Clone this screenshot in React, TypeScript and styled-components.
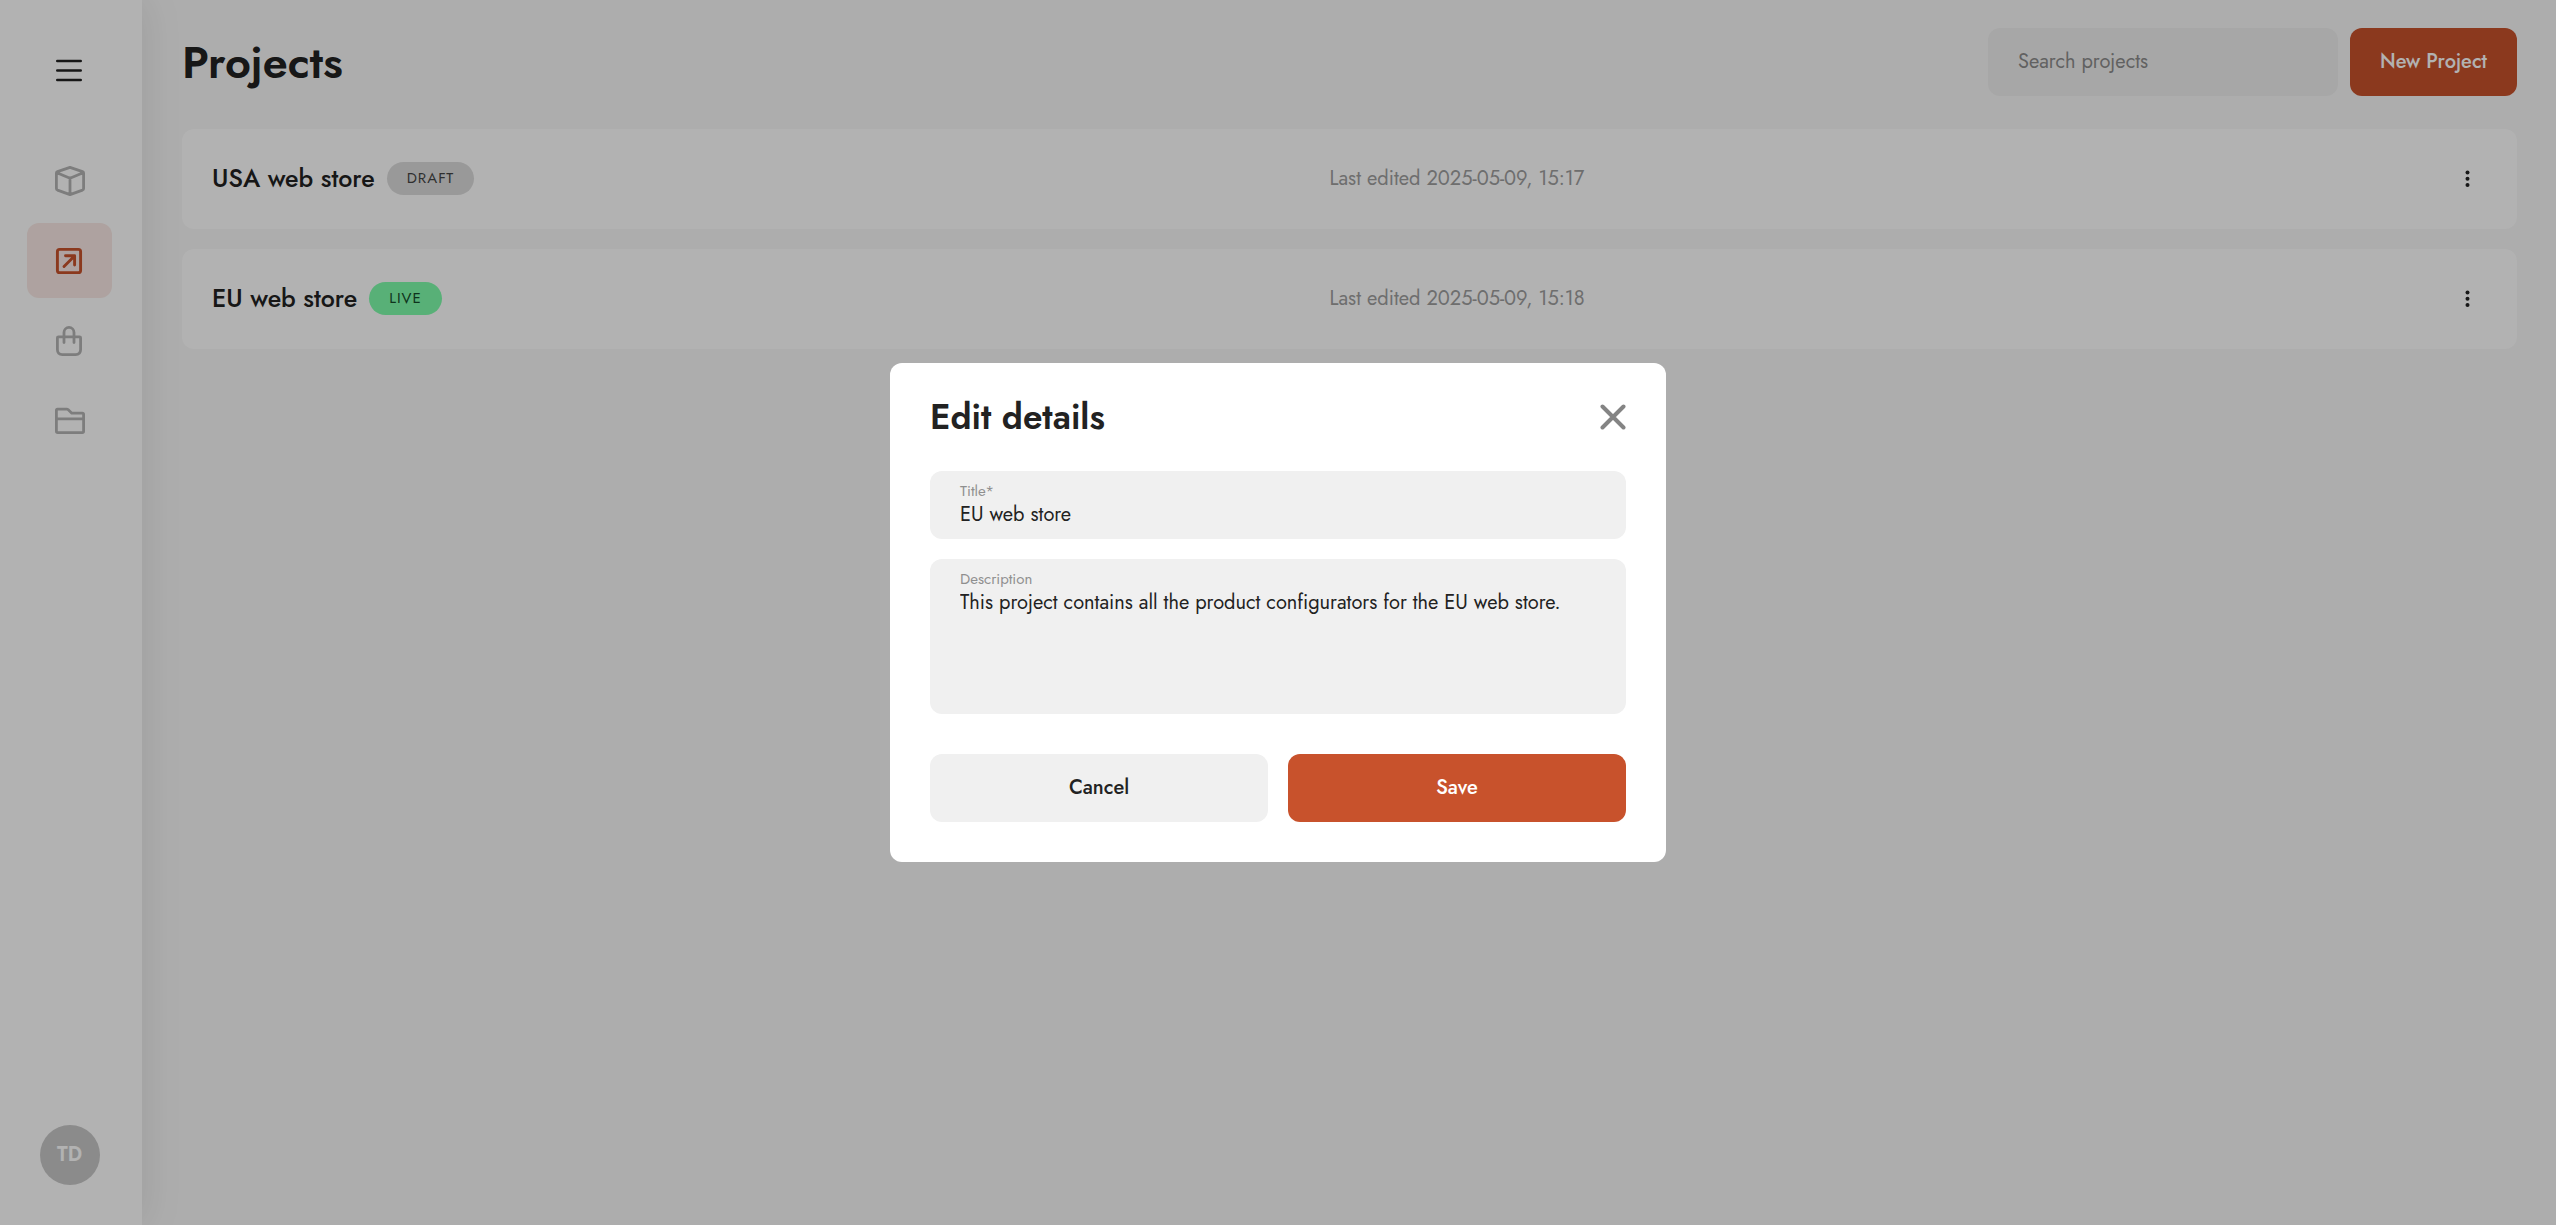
import React, { useState } from "react";
import styled, { createGlobalStyle, css } from "styled-components";

const color = {
  page: "#f8f8f8",
  surface: "#ffffff",
  field: "#f0f0f0",
  ink: "#222222",
  muted: "#9e9e9e",
  icon: "#b4b4b4",
  accent: "#c8522c",
  accentSoft: "#f9e9e5",
};

const GlobalStyle = createGlobalStyle`
  * { box-sizing: border-box; }
  body {
    margin: 0;
    background: ${color.page};
    color: ${color.ink};
    font-family: Jost, Lato, "Open Sans", sans-serif;
    font-size: 20px;
  }
  button, input, textarea { font: inherit; color: inherit; }
`;

const Shell = styled.div`
  display: flex;
  min-height: 100vh;
`;

const Sidebar = styled.aside`
  position: relative;
  z-index: 1;
  display: flex;
  flex-direction: column;
  width: 142px;
  padding: 40px 30px 40px 27px;
  background: ${color.surface};
  box-shadow: 0 0 40px rgba(0, 0, 0, 0.1);
`;

const IconButton = styled.button`
  display: grid;
  place-items: center;
  padding: 0;
  border: 0;
  background: none;
  cursor: pointer;
`;

const MenuToggle = styled(IconButton)`
  height: 60px;
`;

const Nav = styled.nav`
  display: flex;
  flex-direction: column;
  gap: 5px;
  margin-top: 43px;
`;

const NavLink = styled.a<{ $active?: boolean }>`
  display: grid;
  place-items: center;
  height: 75px;
  border-radius: 12px;
  color: ${(p) => (p.$active ? color.accent : color.icon)};
  background: ${(p) => (p.$active ? color.accentSoft : "transparent")};
`;

const Avatar = styled.button`
  align-self: center;
  width: 60px;
  height: 60px;
  margin-top: auto;
  padding: 0 0 2px;
  border: 0;
  border-radius: 50%;
  background: #c8c8c8;
  color: #ffffff;
  font-weight: 600;
`;

const Main = styled.main`
  flex: 1;
  min-width: 0;
  padding: 28px 39px 28px 40px;
`;

const Header = styled.header`
  display: flex;
  align-items: center;
  justify-content: space-between;
  margin-bottom: 33px;
`;

const PageTitle = styled.h1`
  margin: 0;
  padding-top: 2px;
  font-size: 45px;
  line-height: 60px;
  font-weight: 600;
`;

const Actions = styled.div`
  display: flex;
  gap: 12px;
`;

const boxShape = css`
  height: 68px;
  border: 0;
  border-radius: 12px;
  outline: none;
`;

const Search = styled.input`
  ${boxShape}
  width: 350px;
  padding: 0 30px 2px;
  background: ${color.field};
  &::placeholder { color: #8c8c8c; opacity: 1; }
`;

const Button = styled.button<{ $primary?: boolean }>`
  ${boxShape}
  padding: 0 30px 2px;
  font-weight: 500;
  white-space: nowrap;
  cursor: pointer;
  background: ${(p) => (p.$primary ? color.accent : color.field)};
  color: ${(p) => (p.$primary ? "#ffffff" : color.ink)};
`;

const ProjectList = styled.ul`
  display: grid;
  gap: 20px;
  margin: 0;
  padding: 0;
  list-style: none;
`;

const ProjectRow = styled.li`
  display: grid;
  grid-template-columns: 1fr 1fr 40px;
  align-items: center;
  height: 100px;
  padding: 0 30px 2px;
  border-radius: 12px;
  background: ${color.surface};
`;

const ProjectName = styled.div`
  display: flex;
  align-items: center;
  gap: 12px;
  font-size: 25px;
  font-weight: 500;
`;

const Badge = styled.span<{ $live?: boolean }>`
  padding: 0 20px;
  border-radius: 17px;
  font-size: 15px;
  font-weight: 400;
  line-height: 33px;
  letter-spacing: 1px;
  background: ${(p) => (p.$live ? "#7efcab" : "#dcdcdc")};
  color: ${(p) => (p.$live ? "#154a2a" : "#444444")};
`;

const Edited = styled.time`
  color: ${color.muted};
`;

const RowMenu = styled(IconButton)`
  height: 40px;
`;

const Overlay = styled.div`
  position: fixed;
  inset: 0;
  z-index: 2;
  display: grid;
  place-items: center;
  background: rgba(0, 0, 0, 0.3);
`;

const Dialog = styled.form`
  display: grid;
  gap: 20px;
  width: 776px;
  max-width: 100%;
  padding: 30px 40px 40px;
  border-radius: 12px;
  background: ${color.surface};
`;

const DialogHeader = styled.div`
  display: flex;
  align-items: center;
  justify-content: space-between;
  margin-bottom: 10px;
`;

const DialogTitle = styled.h2`
  margin: 0;
  font-size: 35px;
  line-height: 48px;
  font-weight: 600;
`;

const Field = styled.label<{ $tall?: boolean }>`
  display: flex;
  flex-direction: column;
  height: ${(p) => (p.$tall ? 155 : 68)}px;
  padding: 10px 30px;
  border-radius: 12px;
  background: ${color.field};
`;

const FieldLabel = styled.span`
  font-size: 15px;
  line-height: 20px;
  color: #8f8f8f;
`;

const control = css`
  width: 100%;
  padding: 0;
  border: 0;
  outline: none;
  background: transparent;
  line-height: 28px;
`;

const TextInput = styled.input`
  ${control}
  height: 28px;
`;

const TextArea = styled.textarea`
  ${control}
  flex: 1;
  resize: none;
`;

const DialogActions = styled.div`
  display: grid;
  grid-template-columns: 1fr 1fr;
  gap: 20px;
  margin-top: 20px;
`;

const stroke = {
  fill: "none",
  stroke: "currentColor",
  strokeWidth: 2.6,
  strokeLinecap: "round",
  strokeLinejoin: "round",
} as const;

const MenuIcon = () => (
  <svg width="30" height="30" viewBox="0 0 30 30" {...stroke}>
    <path d="M2.3 6H25.7M2.3 15.5H25.7M2.3 25H25.7" />
  </svg>
);

const BoxIcon = () => (
  <svg width="30" height="30" viewBox="0 0 30 30" {...stroke} strokeWidth={2.8}>
    <path d="M15 1.4 27.5 5.6Q28.6 6 28.6 7V22.6Q28.6 23.6 27.5 24.1L15 28.6 2.5 24.1Q1.4 23.6 1.4 22.6V7Q1.4 6 2.5 5.6ZM1.9 6.7 15 12.2 28.1 6.7M15 12.2V28.4" />
  </svg>
);

const ProjectIcon = () => (
  <svg width="30" height="30" viewBox="0 0 30 30" {...stroke} strokeWidth={2.9}>
    <rect x="2.4" y="3.4" width="23.2" height="23.2" rx="2.2" />
    <path d="M10.5 9.8H19.6V19M19 10.5 9 20.5" />
  </svg>
);

const BagIcon = () => (
  <svg width="30" height="30" viewBox="0 0 30 30" {...stroke} strokeWidth={2.8}>
    <path d="M3.4 10.8H24.6Q25.6 10.8 25.6 11.8V23.6Q25.6 28.6 20.6 28.6H7.4Q2.4 28.6 2.4 23.6V11.8Q2.4 10.8 3.4 10.8ZM9 16.5V6.5a5 5.1 0 0 1 10 0V16.5" />
  </svg>
);

const FolderIcon = () => (
  <svg width="30" height="30" viewBox="0 0 30 30" {...stroke} strokeWidth={2.8}>
    <path d="M1.4 4.3Q1.4 3.2 2.5 3.2H11.6Q12.6 3.2 13.3 3.8L16.8 7.2H27.3Q28.6 7.2 28.6 8.6V25.3Q28.6 26.6 27.3 26.6H2.7Q1.4 26.6 1.4 25.3ZM1.4 12.9H28.6" />
  </svg>
);

const DotsIcon = () => (
  <svg width="20" height="20" viewBox="0 0 20 20" fill={color.ink}>
    <circle cx="10.5" cy="4.4" r="2" />
    <circle cx="10.5" cy="10.7" r="2" />
    <circle cx="10.5" cy="17" r="2" />
  </svg>
);

const CloseIcon = () => (
  <svg width="26" height="26" viewBox="0 0 26 26" {...stroke} stroke="#848484" strokeWidth={4}>
    <path d="M2.5 2.5 23.5 23.5M23.5 2.5 2.5 23.5" />
  </svg>
);

const navItems = [
  { name: "Products", Icon: BoxIcon },
  { name: "Projects", Icon: ProjectIcon },
  { name: "Orders", Icon: BagIcon },
  { name: "Files", Icon: FolderIcon },
];

const projects = [
  { name: "USA web store", live: false, edited: "2025-05-09, 15:17" },
  { name: "EU web store", live: true, edited: "2025-05-09, 15:18" },
];

export default function App() {
  const [title, setTitle] = useState("EU web store");
  const [description, setDescription] = useState(
    "This project contains all the product configurators for the EU web store."
  );

  return (
    <>
      <GlobalStyle />
      <Shell>
        <Sidebar>
          <MenuToggle aria-label="Toggle menu">
            <MenuIcon />
          </MenuToggle>
          <Nav>
            {navItems.map(({ name, Icon }) => (
              <NavLink key={name} href="#" aria-label={name} $active={name === "Projects"}>
                <Icon />
              </NavLink>
            ))}
          </Nav>
          <Avatar>TD</Avatar>
        </Sidebar>
        <Main>
          <Header>
            <PageTitle>Projects</PageTitle>
            <Actions>
              <Search type="search" placeholder="Search projects" aria-label="Search projects" />
              <Button $primary>New Project</Button>
            </Actions>
          </Header>
          <ProjectList>
            {projects.map((p) => (
              <ProjectRow key={p.name}>
                <ProjectName>
                  {p.name}
                  <Badge $live={p.live}>{p.live ? "LIVE" : "DRAFT"}</Badge>
                </ProjectName>
                <Edited>Last edited {p.edited}</Edited>
                <RowMenu aria-label={`Actions for ${p.name}`}>
                  <DotsIcon />
                </RowMenu>
              </ProjectRow>
            ))}
          </ProjectList>
        </Main>
      </Shell>
      <Overlay>
        <Dialog role="dialog" aria-labelledby="dialog-title" onSubmit={(e) => e.preventDefault()}>
          <DialogHeader>
            <DialogTitle id="dialog-title">Edit details</DialogTitle>
            <IconButton type="button" aria-label="Close">
              <CloseIcon />
            </IconButton>
          </DialogHeader>
          <Field>
            <FieldLabel>Title*</FieldLabel>
            <TextInput value={title} onChange={(e) => setTitle(e.target.value)} />
          </Field>
          <Field $tall>
            <FieldLabel>Description</FieldLabel>
            <TextArea value={description} onChange={(e) => setDescription(e.target.value)} />
          </Field>
          <DialogActions>
            <Button type="button">Cancel</Button>
            <Button $primary type="submit">Save</Button>
          </DialogActions>
        </Dialog>
      </Overlay>
    </>
  );
}
